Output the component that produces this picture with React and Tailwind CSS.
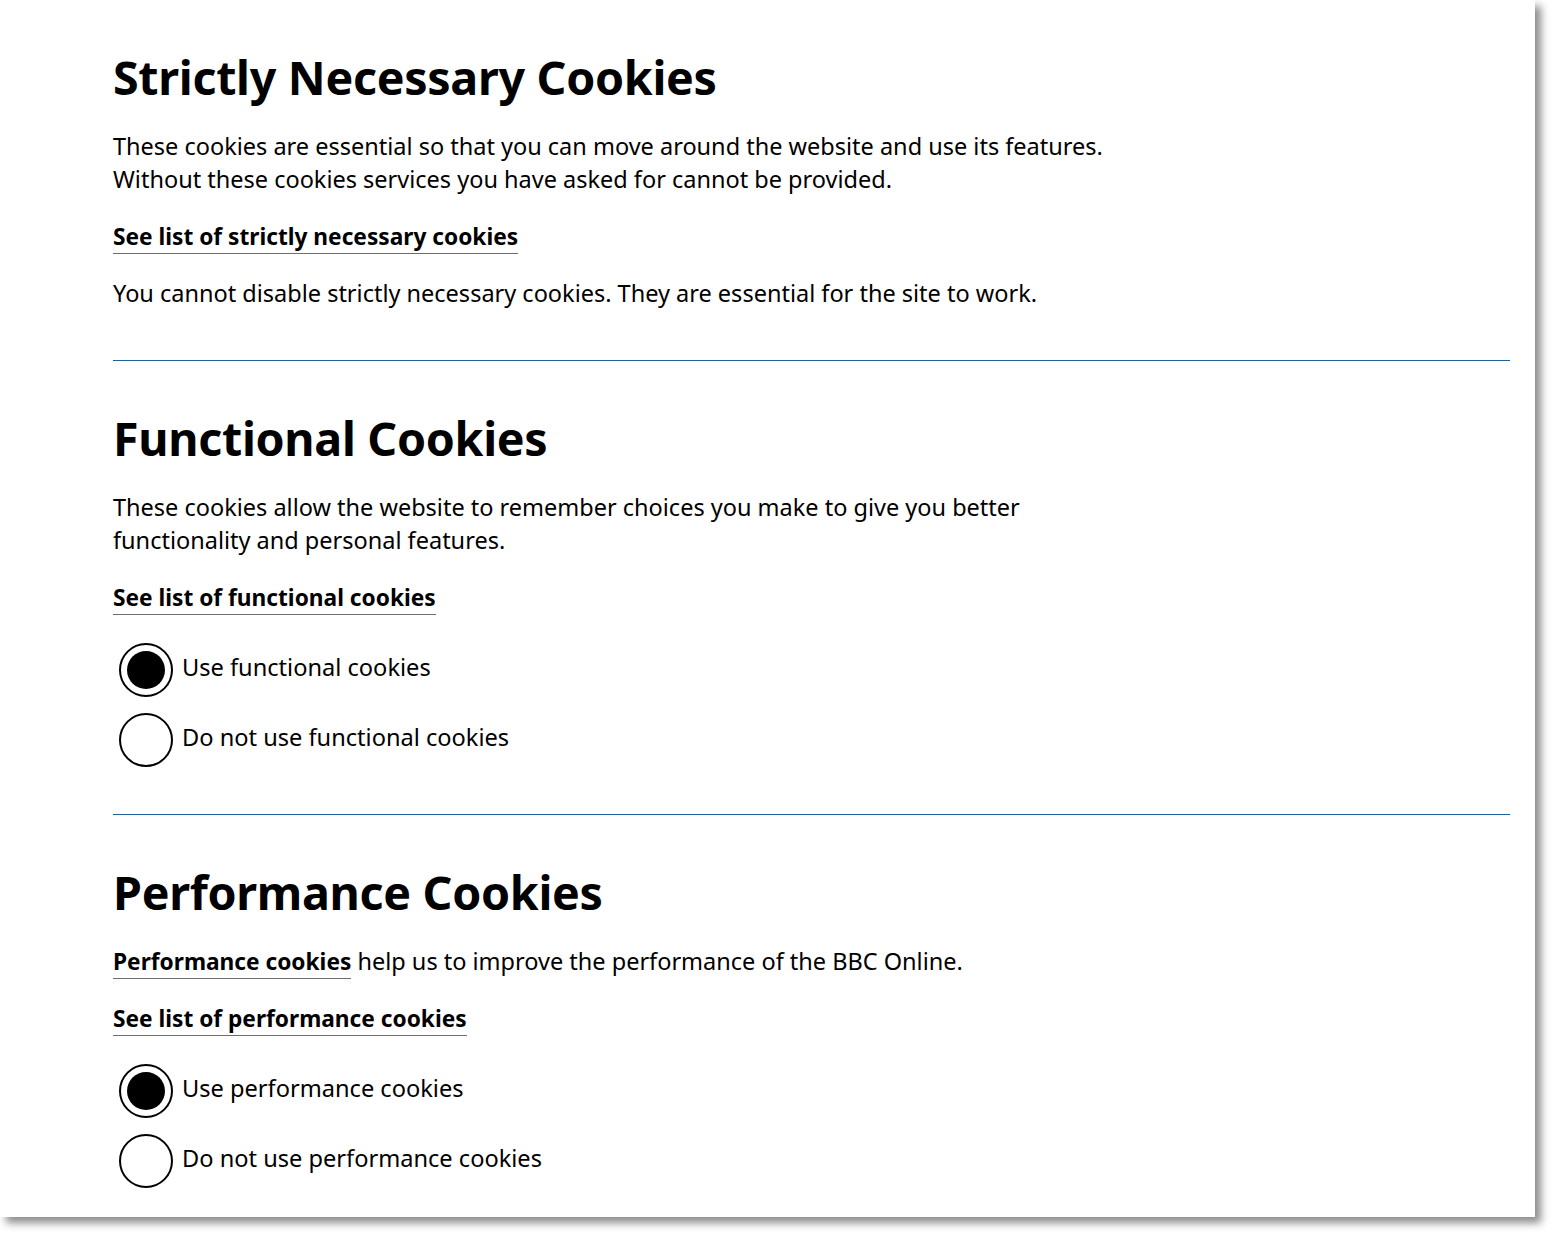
import { useState } from "react";

const font = { fontFamily: '"Noto Sans", "Open Sans", Arial, sans-serif' };

function TextLink({ children }) {
  return (
    <a
      href="#"
      className="font-bold text-[22.7px] text-black border-b border-[#6e6e6e] pb-[1px] no-underline"
    >
      {children}
    </a>
  );
}

function Radio({ checked, onChange, label }) {
  return (
    <label className="flex items-center cursor-pointer ml-[6px] h-[54px]">
      <span className="relative flex items-center justify-center w-[54px] h-[54px] rounded-full border-2 border-black bg-white shrink-0">
        <input
          type="radio"
          checked={checked}
          onChange={onChange}
          className="absolute inset-0 opacity-0 cursor-pointer"
        />
        {checked && <span className="w-[38px] h-[38px] rounded-full bg-black" />}
      </span>
      <span className="ml-[9px] -mt-[5px] text-[23.6px] leading-[33px] text-black">{label}</span>
    </label>
  );
}

function ChoiceGroup({ name }) {
  const [on, setOn] = useState(true);
  return (
    <div className="mt-[29px] flex flex-col gap-[16px]">
      <Radio checked={on} onChange={() => setOn(true)} label={`Use ${name} cookies`} />
      <Radio checked={!on} onChange={() => setOn(false)} label={`Do not use ${name} cookies`} />
    </div>
  );
}

export default function App() {
  return (
    <div className="min-h-screen bg-white" style={font}>
      <div className="w-[1535px] bg-white shadow-[6px_6px_8px_rgba(0,0,0,0.45)] pl-[113px] pr-[25px] pt-[48px] pb-[29px] text-black">
        {/* strictly necessary */}
        <section>
          <h2 className="text-[46.6px] leading-[58px] font-bold tracking-[-0.3px]">
            Strictly Necessary Cookies
          </h2>
          <p className="mt-[24px] text-[23.5px] leading-[33px]">
            These cookies are essential so that you can move around the website and use its features.
            <br />
            Without these cookies services you have asked for cannot be provided.
          </p>
          <p className="mt-[24px] text-[23.5px] leading-[33px]">
            <TextLink>See list of strictly necessary cookies</TextLink>
          </p>
          <p className="mt-[24px] text-[23.5px] leading-[33px]">
            You cannot disable strictly necessary cookies. They are essential for the site to work.
          </p>
        </section>

        <hr className="mt-[50px] border-0 border-t border-[#1f5f9a]" />

        {/* functional */}
        <section className="pt-[48px]">
          <h2 className="text-[46.6px] leading-[58px] font-bold tracking-[-0.3px]">
            Functional Cookies
          </h2>
          <p className="mt-[24px] text-[23.5px] leading-[33px]">
            These cookies allow the website to remember choices you make to give you better
            <br />
            functionality and personal features.
          </p>
          <p className="mt-[24px] text-[23.5px] leading-[33px]">
            <TextLink>See list of functional cookies</TextLink>
          </p>
          <ChoiceGroup name="functional" />
        </section>

        <hr className="mt-[47px] border-0 border-t border-[#1f5f9a]" />

        {/* performance */}
        <section className="pt-[48px]">
          <h2 className="text-[46.6px] leading-[58px] font-bold tracking-[-0.3px]">
            Performance Cookies
          </h2>
          <p className="mt-[24px] text-[23.5px] leading-[33px]">
            <TextLink>Performance cookies</TextLink> help us to improve the performance of the BBC Online.
          </p>
          <p className="mt-[24px] text-[23.5px] leading-[33px]">
            <TextLink>See list of performance cookies</TextLink>
          </p>
          <ChoiceGroup name="performance" />
        </section>
      </div>
    </div>
  );
}
